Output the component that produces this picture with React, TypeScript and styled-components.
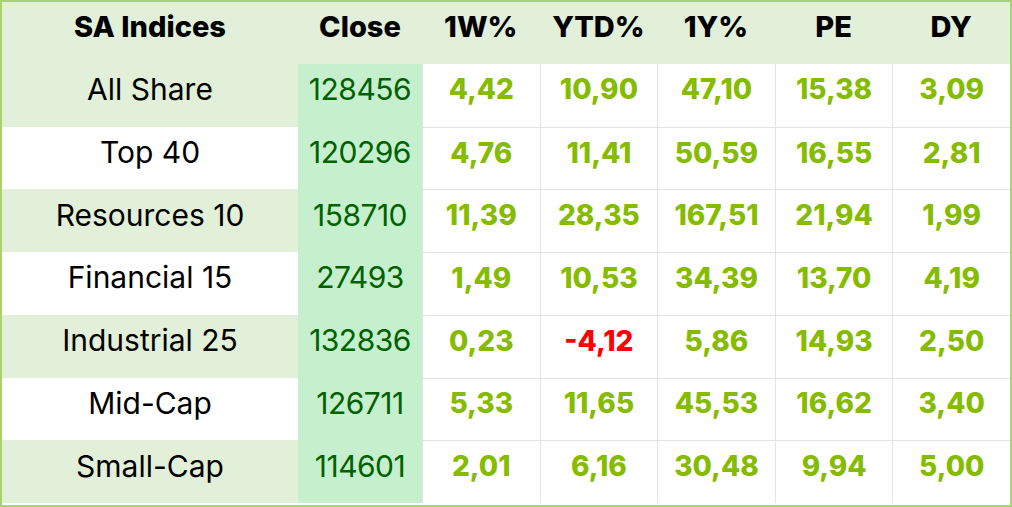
import React from "react";
import styled, { createGlobalStyle } from "styled-components";

const GlobalStyle = createGlobalStyle`
  html, body {
    margin: 0;
    padding: 0;
    background: #ffffff;
  }
  * { box-sizing: border-box; }
`;

const Table = styled.div`
  width: 1012px;
  height: 507px;
  border: 2px solid #a9d46c;
  padding-bottom: 2px;
  background: #ffffff;
  display: grid;
  grid-template-columns: 296px 124px repeat(5, 1fr);
  grid-template-rows: 62px repeat(7, 1fr);
  font-family: Inter, "Liberation Sans", sans-serif;
`;

const Cell = styled.div`
  display: flex;
  align-items: center;
  justify-content: center;
  padding-bottom: 12px;
  white-space: nowrap;
  line-height: 1;
`;

const HeaderCell = styled(Cell)`
  background: #e2efd9;
  color: #000000;
  font-weight: 800;
  font-size: 29px;
  padding-bottom: 14px;
`;

const NameCell = styled(Cell)<{ $alt: boolean }>`
  background: ${(p) => (p.$alt ? "#e2efd9" : "#ffffff")};
  color: #000000;
  font-weight: 400;
  font-size: 30px;
`;

const CloseCell = styled(Cell)`
  background: #c6efce;
  color: #006100;
  font-weight: 400;
  font-size: 30px;
  letter-spacing: -0.5px;
`;

const ValueCell = styled(Cell)<{ $negative: boolean; $first: boolean }>`
  color: ${(p) => (p.$negative ? "#ff0000" : "#86bc00")};
  font-weight: 800;
  font-size: 28px;
  border-left: 1px solid #e3e3e3;
  border-top: ${(p) => (p.$first ? "none" : "1px solid #e3e3e3")};
`;

type Row = { name: string; close: string; values: string[] };

const headers = ["SA Indices", "Close", "1W%", "YTD%", "1Y%", "PE", "DY"];

const rows: Row[] = [
  { name: "All Share", close: "128456", values: ["4,42", "10,90", "47,10", "15,38", "3,09"] },
  { name: "Top 40", close: "120296", values: ["4,76", "11,41", "50,59", "16,55", "2,81"] },
  { name: "Resources 10", close: "158710", values: ["11,39", "28,35", "167,51", "21,94", "1,99"] },
  { name: "Financial 15", close: "27493", values: ["1,49", "10,53", "34,39", "13,70", "4,19"] },
  { name: "Industrial 25", close: "132836", values: ["0,23", "-4,12", "5,86", "14,93", "2,50"] },
  { name: "Mid-Cap", close: "126711", values: ["5,33", "11,65", "45,53", "16,62", "3,40"] },
  { name: "Small-Cap", close: "114601", values: ["2,01", "6,16", "30,48", "9,94", "5,00"] },
];

export default function App() {
  return (
    <>
      <GlobalStyle />
      <Table>
        {headers.map((h) => (
          <HeaderCell key={h}>{h}</HeaderCell>
        ))}
        {rows.map((r, i) => (
          <React.Fragment key={r.name}>
            <NameCell $alt={i % 2 === 0}>{r.name}</NameCell>
            <CloseCell>{r.close}</CloseCell>
            {r.values.map((v, j) => (
              <ValueCell key={j} $negative={v.startsWith("-")} $first={i === 0}>
                {v}
              </ValueCell>
            ))}
          </React.Fragment>
        ))}
      </Table>
    </>
  );
}
